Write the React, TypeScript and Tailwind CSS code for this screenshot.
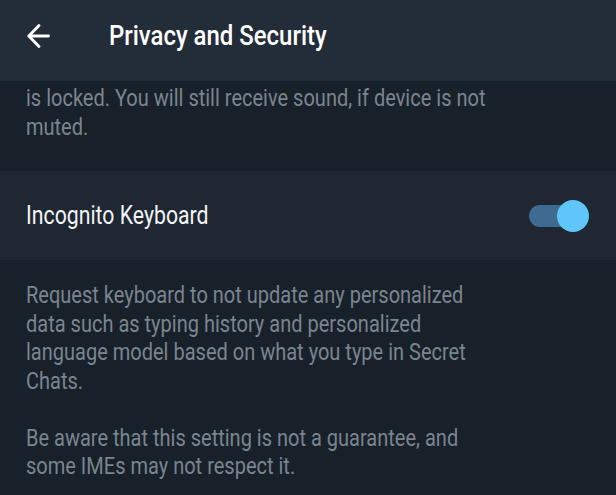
import React from "react";

export default function App() {
  return (
    <div
      className="w-[616px] h-[495px] overflow-hidden bg-[#18202a] flex flex-col"
      style={{ fontFamily: "Roboto, 'Noto Sans', sans-serif" }}
    >
      <div className="h-[81px] shrink-0 bg-[#232c39] flex items-center pb-[9px]">
        <div className="w-[109px] pl-[27px] flex items-center">
          <svg width="23" height="26" viewBox="0 0 23 26" fill="none">
            <path d="M21.5 13H2M12 2.5L1.8 13L12 23.5" stroke="#ffffff" strokeWidth="2.8" strokeLinecap="round" strokeLinejoin="round" />
          </svg>
        </div>
        <div className="text-white text-[28px] font-medium leading-none whitespace-nowrap origin-left scale-x-[0.855]">
          Privacy and Security
        </div>
      </div>
      <div className="px-[26px] pt-[3px] pb-[29px] text-[#7b858f] text-[23px] leading-[29px]">
        <p className="w-[542px] origin-left scale-x-[0.87]">
          is locked. You will still receive sound, if device is not muted.
        </p>
      </div>
      <div className="h-[89px] shrink-0 bg-[#1f2733] flex items-center justify-between pl-[26px] pr-[27px]">
        <div className="text-[#f2f4f6] text-[25px] whitespace-nowrap origin-left scale-x-[0.85]">Incognito Keyboard</div>
        <div className="relative w-[60px] h-[32px] flex items-center">
          <div className="w-[46px] h-[22px] rounded-full bg-[#3e6b8f]" />
          <div className="absolute right-0 top-0 w-[32px] h-[32px] rounded-full bg-[#5ec6f8]" />
        </div>
      </div>
      <div className="px-[26px] pt-[22px] text-[#7b858f] text-[23px] leading-[28.5px]">
        <p className="w-[542px] origin-left scale-x-[0.87]">
          Request keyboard to not update any personalized data such as typing history and personalized language model based on what you type in Secret Chats.
        </p>
        <p className="mt-[28.5px] w-[542px] origin-left scale-x-[0.87]">
          Be aware that this setting is not a guarantee, and some IMEs may not respect it.
        </p>
      </div>
    </div>
  );
}
